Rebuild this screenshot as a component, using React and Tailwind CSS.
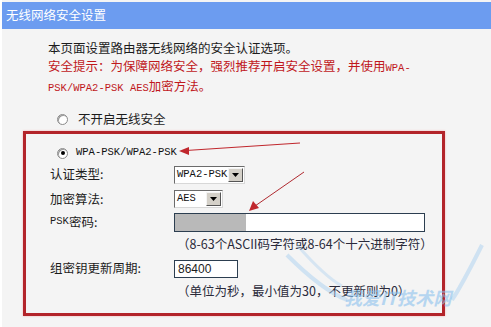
import React from 'react';

const cjk = "font-['Noto_Sans_CJK_SC','Liberation_Sans',sans-serif]";
const mono = "font-['Liberation_Mono','Noto_Sans_CJK_SC',monospace] text-[10.5px]";

function Radio({ checked }) {
  return (
    <span className="relative inline-flex h-[11px] w-[11px] items-center justify-center rounded-full border border-[#8a8a8a] bg-white shadow-[inset_1px_1px_0_#9a9a9a]">
      {checked && <span className="h-[4px] w-[4px] rounded-full bg-black"></span>}
    </span>
  );
}

function Select({ value, width }) {
  return (
    <div className={`flex h-[18px] items-center border border-t-[#6b6b6b] border-l-[#6b6b6b] border-r-[#d8d8d8] border-b-[#d8d8d8] bg-white ${width}`}>
      <span className={`min-w-0 flex-1 whitespace-nowrap pl-[2px] ${mono} text-[#111]`}>{value}</span>
      <span className="mr-[1px] flex h-[14px] w-[15px] shrink-0 items-center justify-center border border-t-[#f4f4f4] border-l-[#f4f4f4] border-r-[#555] border-b-[#555] bg-[#d4d0c8]">
        <svg width="7" height="4" viewBox="0 0 7 4">
          <path d="M0 0 L7 0 L3.5 4 Z" fill="#000" />
        </svg>
      </span>
    </div>
  );
}

function App() {
  return (
    <div className={`relative h-[327px] w-[491px] overflow-hidden border-l-2 border-white bg-[#f4f4f4] pt-[2px] ${cjk} text-[12.5px] text-[#1c1c1c]`}>
      <div className="flex h-[27px] items-center bg-[#6c9cf0] pl-[4px] text-[12.5px] text-white">
        无线网络安全设置
      </div>

      <div className="pl-[46px] pt-[10px] leading-[18px]">
        <p>本页面设置路由器无线网络的安全认证选项。</p>
        <p className="text-[#c0181c]">
          安全提示：为保障网络安全，强烈推荐开启安全设置，并使用<span className={mono}>WPA-</span>
        </p>
        <p className="text-[#c0181c]">
          <span className={mono}>PSK/WPA2-PSK AES</span>加密方法。
        </p>
        <div className="mt-[13px] flex h-[18px] items-center gap-[10px] pl-[9px]">
          <Radio />
          <span>不开启无线安全</span>
        </div>
      </div>

      <div className="ml-[21px] mt-[3px] h-[185px] w-[422px] border-[3px] border-[#b3242a] shadow-[0_0_2px_#f6b0b0] pt-[10px] pl-[24px]">
        <div className="flex h-[18px] items-center gap-[8px] pl-[7px]">
          <Radio checked />
          <span className={`${mono} text-[#111]`}>WPA-PSK/WPA2-PSK</span>
        </div>
        <div className="grid grid-cols-[124px_1fr] items-center">
          <div className="flex h-[25px] items-center">认证类型:</div>
          <Select value="WPA2-PSK" width="w-[71px]" />
          <div className="flex h-[24px] items-center">加密算法:</div>
          <Select value="AES" width="w-[49px]" />
          <div className="flex h-[22px] items-center"><span className={mono}>PSK</span>密码:</div>
          <div className="flex h-[19px] w-[251px] border border-[#2c3e50] bg-white">
            <div className="w-[71px] bg-[#b9b9b9]"></div>
          </div>
          <div></div>
          <div className="flex h-[22px] items-center pl-[3px] text-[#2a2a3a]">
            （8-63个ASCII码字符或8-64个十六进制字符）
          </div>
          <div className="flex h-[27px] items-center">组密钥更新周期:</div>
          <div className="flex h-[18px] w-[64px] items-center border border-[#2c3e50] bg-white pl-[3px] font-['Liberation_Sans',sans-serif] text-[12px]">
            86400
          </div>
          <div></div>
          <div className="flex h-[18px] items-center pl-[3px] text-[#2a2a3a]">
            （单位为秒，最小值为30，不更新则为0）
          </div>
        </div>
      </div>

      <svg className="pointer-events-none absolute left-0 top-0" width="491" height="327">
        <line x1="298" y1="143" x2="184" y2="150.5" stroke="#c0272d" strokeWidth="1.2" />
        <path d="M177 151 L187 147 L187 155 Z" fill="#c0272d" />
        <line x1="302" y1="172" x2="253" y2="206" stroke="#b02a30" strokeWidth="1" />
        <path d="M247 211 L251 201 L257 208 Z" fill="#c0272d" />
        <path d="M285 255 C 305 275, 325 292, 345 300" stroke="#a9d0f0" strokeWidth="4" fill="none" opacity="0.5" />
        <path d="M295 245 C 310 262, 325 278, 340 286" stroke="#a9d0f0" strokeWidth="3" fill="none" opacity="0.4" />
        <path d="M480 245 C 470 265, 460 285, 450 300" stroke="#a9d0f0" strokeWidth="4" fill="none" opacity="0.5" />
      </svg>
      <div className="pointer-events-none absolute left-[342px] top-[288px] text-[18px] font-bold italic leading-none text-[#8cc2ee] opacity-60">
        我爱IT技术网
      </div>
    </div>
  );
}

export default App;
